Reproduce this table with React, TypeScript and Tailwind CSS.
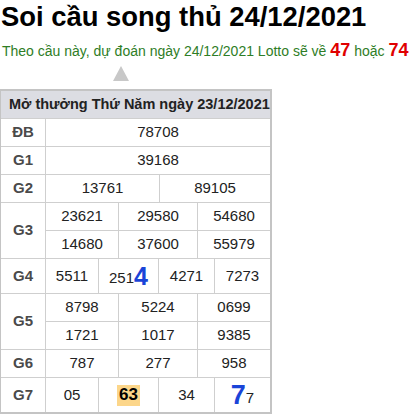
import React from "react";

const cell = "flex items-center justify-center border-l border-t border-[#cfcfcf] text-[15px] text-[#222]";
const label = "flex items-center justify-center border-t border-[#cfcfcf] text-[15px] font-bold text-[#4a4a4a]";

function Row({ name, h, children, cols }: { name: string; h: string; children: React.ReactNode; cols: string }) {
  return (
    <div className={`grid grid-cols-[44px_1fr] ${h}`}>
      <div className={label}>{name}</div>
      <div className={`grid ${cols}`}>{children}</div>
    </div>
  );
}

export default function App() {
  return (
    <div className="w-[412px] h-[415px] bg-white overflow-hidden font-['Liberation_Sans',Arial,sans-serif]">
      <h1 className="pl-[1px] pt-[1px] text-[27.4px] leading-[31px] font-bold text-black whitespace-nowrap">Soi cầu song thủ 24/12/2021</h1>
      <p className="mt-[9px] pl-[2px] text-[14px] leading-[18px] text-[#2e7d26] whitespace-nowrap">
        Theo cầu này, dự đoán ngày 24/12/2021 Lotto sẽ về{" "}
        <span className="text-[18px] font-bold text-[#e00000]">47</span> hoặc{" "}
        <span className="text-[18px] font-bold text-[#e00000]">74</span>
      </p>
      <div className="mt-[6px] pl-[113px]">
        <div className="w-0 h-0 border-l-[8px] border-r-[8px] border-b-[15px] border-l-transparent border-r-transparent border-b-[#c8c8c8]" />
      </div>

      <div className="mt-[8px] w-[272px] border-t-2 border-r-2 border-b-2 border-l border-[#c4c4c4]">
        <div className="h-[27px] flex items-center pl-[8px] bg-[#dcdde3] text-[14.5px] font-bold text-[#222]">
          Mở thưởng Thứ Năm ngày 23/12/2021
        </div>

        <Row name="ĐB" h="h-[28px]" cols="grid-cols-1">
          <div className={cell}>78708</div>
        </Row>
        <Row name="G1" h="h-[28px]" cols="grid-cols-1">
          <div className={cell}>39168</div>
        </Row>
        <Row name="G2" h="h-[28px]" cols="grid-cols-[114px_1fr]">
          <div className={cell}>13761</div>
          <div className={cell}>89105</div>
        </Row>

        <div className="grid grid-cols-[44px_1fr] h-[56px]">
          <div className={label}>G3</div>
          <div className="grid grid-cols-[73px_79px_1fr] grid-rows-2">
            {["23621", "29580", "54680", "14680", "37600", "55979"].map((n) => (
              <div key={n} className={cell}>{n}</div>
            ))}
          </div>
        </div>

        <Row name="G4" h="h-[35px]" cols="grid-cols-[53px_60px_56px_1fr]">
          <div className={cell}>5511</div>
          <div className={cell}>
            <span className="pt-[4px]">251</span>
            <span className="text-[25px] font-bold text-[#1a44d8] leading-none">4</span>
          </div>
          <div className={cell}>4271</div>
          <div className={cell}>7273</div>
        </Row>

        <div className="grid grid-cols-[44px_1fr] h-[56px]">
          <div className={label}>G5</div>
          <div className="grid grid-cols-[73px_79px_1fr] grid-rows-2">
            {["8798", "5224", "0699", "1721", "1017", "9385"].map((n) => (
              <div key={n} className={cell}>{n}</div>
            ))}
          </div>
        </div>

        <Row name="G6" h="h-[28px]" cols="grid-cols-[73px_79px_1fr]">
          <div className={cell}>787</div>
          <div className={cell}>277</div>
          <div className={cell}>958</div>
        </Row>

        <Row name="G7" h="h-[35px]" cols="grid-cols-[53px_60px_56px_1fr]">
          <div className={cell}>05</div>
          <div className={cell}>
            <span className="px-[2px] h-[21px] flex items-center bg-[#fcd68a] text-[17px] font-bold text-black">63</span>
          </div>
          <div className={cell}>34</div>
          <div className={cell}>
            <span className="text-[27px] font-bold text-[#1a44d8] leading-none">7</span>
            <span className="pt-[6px]">7</span>
          </div>
        </Row>
      </div>
    </div>
  );
}
